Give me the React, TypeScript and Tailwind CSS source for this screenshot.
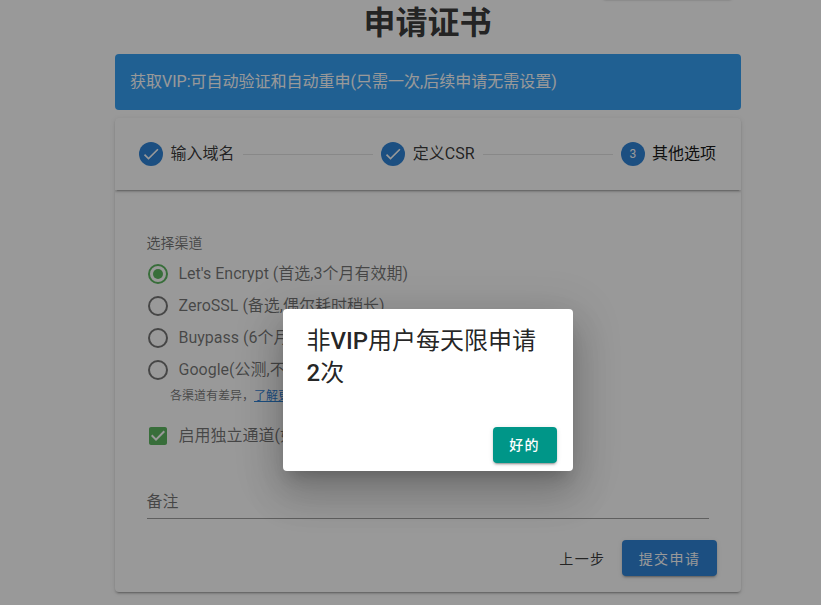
import React from "react";

const FONT = "font-['Roboto','Noto_Sans_CJK_SC',sans-serif]";
const ELEVATION =
  "shadow-[0_3px_1px_-2px_rgba(0,0,0,0.2),0_2px_2px_0_rgba(0,0,0,0.14),0_1px_5px_0_rgba(0,0,0,0.12)]";

function StepBadge({ done, number }: { done?: boolean; number?: number }) {
  return (
    <span className="mr-2 flex size-6 shrink-0 items-center justify-center rounded-full bg-[#1976d2] text-xs text-white">
      {done ? (
        <svg viewBox="0 0 24 24" className="size-5 fill-white">
          <path d="M21,7L9,19L3.5,13.5L4.91,12.09L9,16.17L19.59,5.59L21,7Z" />
        </svg>
      ) : (
        number
      )}
    </span>
  );
}

function RadioRow({ label, checked }: { label: string; checked?: boolean }) {
  return (
    <div className="flex h-8 items-center">
      <svg viewBox="0 0 24 24" className={`-ml-[0.5px] mr-[8.5px] size-6 shrink-0 ${checked ? "fill-[#4caf50]" : "fill-black/60"}`}>
        {checked && <circle cx="12" cy="12" r="5" />}
        <path d="M12,20A8,8 0 0,1 4,12A8,8 0 0,1 12,4A8,8 0 0,1 20,12A8,8 0 0,1 12,20M12,2A10,10 0 0,0 2,12A10,10 0 0,0 12,22A10,10 0 0,0 22,12A10,10 0 0,0 12,2Z" />
      </svg>
      <span className="whitespace-nowrap text-base leading-5 text-black/60">{label}</span>
    </div>
  );
}

function Stepper() {
  return (
    <div className={`flex h-[72px] shrink-0 items-center gap-2 rounded-t px-6 text-base leading-none ${ELEVATION}`}>
      <div className="flex items-center text-black/87">
        <StepBadge done />
        <span>输入域名</span>
      </div>
      <div className="h-px flex-1 bg-black/12" />
      <div className="flex items-center text-black/87">
        <StepBadge done />
        <span>定义CSR</span>
      </div>
      <div className="h-px flex-1 bg-black/12" />
      <div className="-mr-[0.5px] flex items-center text-black">
        <StepBadge number={3} />
        <span className="-ml-px mr-px">其他选项</span>
      </div>
    </div>
  );
}

function ChannelForm() {
  return (
    <div className="flex flex-1 flex-col px-8 pt-[43px]">
      <div className="h-5 text-sm leading-5 text-black/60">选择渠道</div>
      <div className="mt-[5px] flex flex-col">
        <RadioRow label="Let's Encrypt (首选,3个月有效期)" checked />
        <RadioRow label="ZeroSSL (备选,偶尔耗时稍长)" />
        <RadioRow label="Buypass (6个月)" />
        <RadioRow label="Google(公测,不)" />
      </div>
      <div className="pl-[23.5px] pt-px text-xs leading-[19px] text-black/60">
        各渠道有差异，<a className="text-[#1976d2] underline">了解更多</a>
      </div>
      <div className="mt-[14px] flex h-8 items-center">
        <svg viewBox="0 0 24 24" className="-ml-[0.5px] mr-[8.5px] size-6 shrink-0 fill-[#4caf50]">
          <path d="M10,17L5,12L6.41,10.58L10,14.17L17.59,6.58L19,8M19,3H5C3.89,3 3,3.89 3,5V19C3,20.1 3.9,21 5,21H19C20.1,21 21,20.1 21,19V5C21,3.89 20.1,3 19,3Z" />
        </svg>
        <span className="text-base leading-5 text-black/60">启用独立通道(如)</span>
      </div>
      <div className="mt-[37px] h-[30px] border-b border-black/42 text-base leading-[25px] text-black/60">备注</div>
      <div className="-mr-2 mt-[21px] flex justify-end gap-0.5 text-sm tracking-[1.4px]">
        <button className="h-9 px-[14px] pt-px font-normal text-black/87">上一步</button>
        <button className={`h-9 w-[95px] rounded bg-[#1976d2] pl-px pt-px text-white ${ELEVATION}`}>提交申请</button>
      </div>
    </div>
  );
}

function LimitDialog() {
  return (
    <div className="absolute inset-0 bg-[#212121]/46">
      <div className="absolute left-[282.5px] top-[309px] flex h-[162px] w-[290px] flex-col justify-between rounded bg-white pb-2 pl-6 pr-4 pt-4 shadow-[0_11px_15px_-7px_rgba(0,0,0,0.2),0_24px_38px_3px_rgba(0,0,0,0.14),0_9px_46px_8px_rgba(0,0,0,0.12)]">
        <div className="whitespace-nowrap text-2xl leading-8 text-black/87">
          非<span className="font-medium">VIP</span>用户每天限申请
          <br />
          <span className="font-medium">2</span>次
        </div>
        <button className={`h-9 w-16 self-end rounded bg-[#009688] text-sm font-medium tracking-[1.25px] text-white ${ELEVATION}`}>
          好的
        </button>
      </div>
    </div>
  );
}

export default function App() {
  return (
    <div className={`relative h-[605px] w-[821px] overflow-hidden bg-white ${FONT}`}>
      <div className="ml-[114.5px] flex w-[626px] flex-col">
        <div className="-mt-[37px] mb-px mr-2 h-9 w-[131px] self-end rounded bg-white shadow-[0_2px_2px_-1px_rgba(0,0,0,0.2),0_1px_3px_0_rgba(0,0,0,0.12)]" />
        <h1 className="h-[54px] text-center text-[32px] font-bold leading-[46px] text-black/87">申请证书</h1>
        <div className="flex h-14 items-center rounded bg-[#2196f3] px-[15.5px] text-base text-white">
          获取VIP:可自动验证和自动重申(只需一次,后续申请无需设置)
        </div>
        <div className={`mt-2 flex h-[474px] flex-col overflow-hidden rounded bg-white ${ELEVATION}`}>
          <Stepper />
          <ChannelForm />
        </div>
      </div>
      <LimitDialog />
    </div>
  );
}
